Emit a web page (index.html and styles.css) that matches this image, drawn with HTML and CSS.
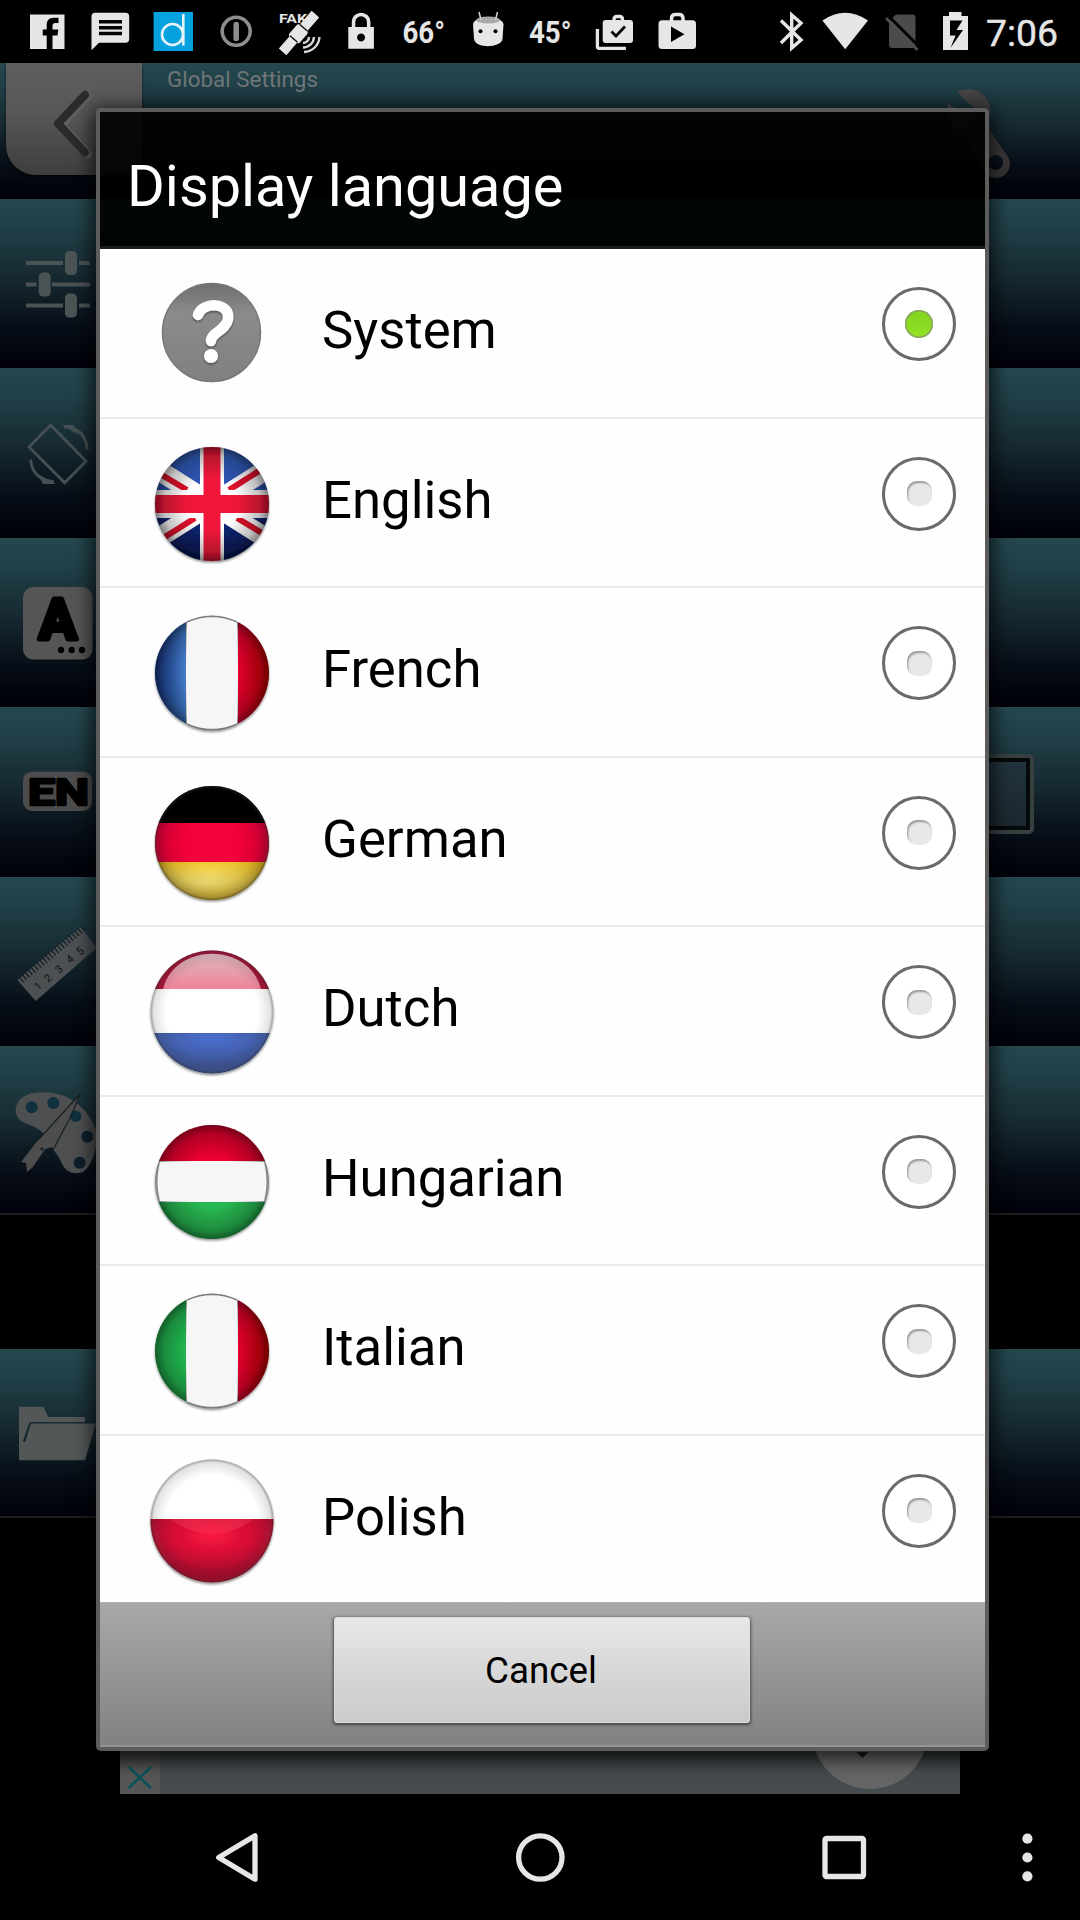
FILE: index.html
```html
<!DOCTYPE html>
<html lang="en">
<head>
<meta charset="utf-8">
<title>Display language</title>
<link rel="stylesheet" href="styles.css">
</head>
<body>
<svg class="defs" width="0" height="0" aria-hidden="true">
  <defs>
    <clipPath id="disc"><circle r="57"/></clipPath>
    <clipPath id="disc-lg"><circle r="61.5"/></clipPath>
    <radialGradient id="shade" cx=".5" cy=".5" r=".5">
      <stop offset=".45" stop-color="#000" stop-opacity="0"/>
      <stop offset=".85" stop-color="#000" stop-opacity=".25"/>
      <stop offset="1" stop-color="#000" stop-opacity=".5"/>
    </radialGradient>
    <radialGradient id="shade-soft" cx=".5" cy=".5" r=".5">
      <stop offset=".75" stop-color="#333" stop-opacity="0"/>
      <stop offset=".95" stop-color="#333" stop-opacity=".14"/>
      <stop offset="1" stop-color="#222" stop-opacity=".45"/>
    </radialGradient>
    <linearGradient id="uk-blue" x1="0" y1="0" x2="0" y2="1"><stop offset=".1" stop-color="#3460c0"/><stop offset=".45" stop-color="#2c4fae"/><stop offset=".6" stop-color="#122a7c"/><stop offset="1" stop-color="#081858"/></linearGradient>
    <linearGradient id="gray" x1="0" y1="0" x2="0" y2="1"><stop offset="0" stop-color="#6e6e6e"/><stop offset=".3" stop-color="#8b8b8b"/><stop offset="1" stop-color="#808080"/></linearGradient>
    <linearGradient id="fr-blue" x1="0" y1="0" x2="1" y2="0"><stop offset="0" stop-color="#1a3d94"/><stop offset="1" stop-color="#4580d0"/></linearGradient>
    <linearGradient id="side-red" x1="0" y1="0" x2="1" y2="0"><stop offset="0" stop-color="#e80034"/><stop offset="1" stop-color="#d00000"/></linearGradient>
    <radialGradient id="gold" cx=".45" cy=".5" r=".6"><stop offset="0" stop-color="#f7e67c"/><stop offset="1" stop-color="#eec022"/></radialGradient>
    <linearGradient id="gloss" x1="0" y1="0" x2="0" y2="1"><stop offset="0" stop-color="#dfb8c0"/><stop offset="1" stop-color="#f08399"/></linearGradient>
    <radialGradient id="nl-blue" cx=".5" cy=".15" r=".65"><stop offset="0" stop-color="#4a6fcf"/><stop offset="1" stop-color="#3d5292"/></radialGradient>
    <radialGradient id="pl-red" cx=".5" cy=".25" r=".6"><stop offset="0" stop-color="#fb1540"/><stop offset=".5" stop-color="#d80f36"/><stop offset="1" stop-color="#a40b29"/></radialGradient>
    <linearGradient id="steel" x1="0" y1="0" x2="1" y2="1"><stop offset="0" stop-color="#4b4849"/><stop offset="1" stop-color="#343133"/></linearGradient>
    <filter id="drop" x="-20%" y="-20%" width="140%" height="140%"><feDropShadow dx="0" dy="1.5" stdDeviation="1.3" flood-color="#000" flood-opacity=".45"/></filter>
  </defs>
</svg>

<div class="phone">
  <header class="status">
    <svg viewBox="0 0 1080 63" width="1080" height="63" fill="#e6e6e6">
      <path fill-rule="evenodd" d="M30 14.500h34.500v34.500h-12v-13.500h5l.8-6h-5.800v-3.500c0-2 .8-3 3.200-3h2.800v-5.200h-4.500c-5 0-7.300 2.800-7.300 7.200v4.500h-4v6h4v13.500H30z"/>
      <path fill-rule="evenodd" d="M95 12.700h30.500a3.700 3.700 0 0 1 3.700 3.700V39a3.700 3.700 0 0 1-3.700 3.700H99l-7.500 7.500V16.400a3.700 3.700 0 0 1 3.500-3.700zM99 20v3.500h23V20zm0 5.900v3.500h23v-3.500zm0 5.900v3.400h23v-3.400z"/>
      <path fill="#06a2df" d="M153.600 12H193v39h-39.400z"/>
      <g fill="none" stroke="#e6f2f8" stroke-width="2.600"><circle cx="172.500" cy="34.500" r="10.500"/><path d="M183.300 14v31.500"/></g>
      <circle cx="236.200" cy="31.300" r="14" fill="none" stroke="#8d8d8d" stroke-width="3.600"/>
      <path d="M236.200 24.500v14" stroke="#8d8d8d" stroke-width="5.500" stroke-linecap="round"/>
      <text class="sb-fake" x="279" y="23" textLength="28" lengthAdjust="spacingAndGlyphs">FAK</text>
      <g transform="translate(299 33) rotate(-49)"><path d="M-25-5H-8V5h-17zM7-5h18V5H7z"/><rect x="-9" y="-7" width="16" height="14" rx="3"/><path d="M-8-5v10M7-5v10" stroke="#000" stroke-width="1.200"/></g>
      <g fill="none" stroke="#d8d8d8" stroke-width="2.400"><path d="M303 43a6 6 0 0 0 6-6M303 47.500a11 11 0 0 0 11-10.500M304 52a16 16 0 0 0 15.500-15"/></g>
      <path fill-rule="evenodd" d="M348.300 27h3.500v-5.500a9.300 8.800 0 0 1 18.600 0V27h3.500v21.700h-25.600zm7-0h11.600v-5a5.800 5.800 0 0 0-11.600 0zM361 33.500a4 4 0 1 0 .1 0z"/>
      <text class="sb-temp" x="402.500" y="42.700" textLength="42.500" lengthAdjust="spacingAndGlyphs">66°</text>
      <path d="M473 24c2-9 28-9 30.500 0l-1 15c-1 9-27 10-28.500 0z"/><ellipse cx="488.200" cy="20" rx="12" ry="3.500" fill="#a8a8a8"/>
      <path d="M481 20l-2-8M495.500 20l2-8" stroke="#ccc" stroke-width="1.600"/><circle cx="480.500" cy="31.300" r="2" fill="#000"/><circle cx="495.500" cy="31.300" r="2" fill="#000"/>
      <text class="sb-temp" x="529" y="42.700" textLength="42.500" lengthAdjust="spacingAndGlyphs">45°</text>
      <path fill="none" stroke="#e6e6e6" stroke-width="3.300" d="M597.400 29v17.500a1.800 1.800 0 0 0 1.800 1.800h26.700M614 21v-1.500q0-3 3-3h2.500q3 0 3 3V21"/>
      <rect x="602.700" y="20" width="30.300" height="23" rx="3"/>
      <path d="M611.500 31.500l4.500 4.500 9-9.500" fill="none" stroke="#000" stroke-width="2.700"/>
      <path d="M671.500 21v-2.500q0-4 4-4h3.500q4 0 4 4V21" fill="none" stroke="#e6e6e6" stroke-width="3.500"/>
      <rect x="658.500" y="20.300" width="37.500" height="28.700" rx="3.500"/><path d="M671 26.500v15.500l13.500-7.800z" fill="#000"/>
      <path d="M781 20.500l20 19.500-9.300 8V15l9.300 8-20 20" fill="none" stroke="#e6e6e6" stroke-width="3.400"/>
      <path d="M822.400 20.500q22.800-15.500 45.600 0L845.200 49.300z"/>
      <path d="M896 14.500h16.500a3 3 0 0 1 3 3V45a3 3 0 0 1-3 3H892a3 3 0 0 1-3-3V21z" fill="#4b4b4b"/><path d="M888.500 16l32 32" stroke="#000" stroke-width="3"/><path d="M886 18l31.500 32" stroke="#4b4b4b" stroke-width="3"/>
      <path fill-rule="evenodd" d="M949 12h12.500v4H968v34h-25V16h6zM950 20.500v15h5.500l-5 12.500 12.500-18h-6.500l6-9.500z"/>
      <text class="sb-time" x="986" y="46" textLength="72" lengthAdjust="spacingAndGlyphs">7:06</text>
    </svg>
  </header>

  <main class="screen">
    <section class="bar">
      <div class="back">
        <svg viewBox="0 0 136 112" width="136" height="112"><path d="M82 33L56 62l26 29" fill="none" stroke="#606060" stroke-width="8" stroke-linecap="round"/><path d="M79 32L52 60.500l27 29" fill="none" stroke="#2b2b2b" stroke-width="8" stroke-linecap="round" stroke-linejoin="round"/></svg>
      </div>
      <h2 class="bar-title">Global Settings</h2>
      <svg class="wrench" viewBox="0 0 70 100" width="70" height="100"><path fill="url(#steel)" fill-rule="evenodd" d="M15 7C31-2 51 10 48 30l-1 14 19 28a13.500 13.500 0 1 1-24 14L24 52Q4 42 6 18l13 10 13-5zM53.500 70a7.500 7.500 0 1 0 .1 0z"/></svg>
    </section>

    <section class="setting">
      <svg viewBox="0 0 100 169" width="100" height="169"><path d="M26 63h37m16 0h11M26 84.500h10.500m15.500 0h38M26 105.600h37m16 0h11" stroke="#4c5355" stroke-width="4"/><g fill="#4c5355"><rect x="65" y="51" width="12" height="24" rx="4.500"/><rect x="38.700" y="72.500" width="12" height="24" rx="4.500"/><rect x="65" y="93.500" width="12" height="24" rx="4.500"/></g></svg>
    </section>
    <section class="setting">
      <svg viewBox="0 0 100 169" width="100" height="169"><g fill="none" stroke="#465054" stroke-width="2.800"><path d="M50.700 56L86 92.300l-21.300 21.500L29 78z"/><path d="M64 57.500q21 1 23.300 23M30.700 90.600q1.500 20 23 22"/></g><path fill="#465054" d="M62 56h11l6 10zM56 115H43l-5-10z"/></svg>
    </section>
    <section class="setting">
      <svg viewBox="0 0 100 169" width="100" height="169"><rect x="23" y="48" width="69.500" height="72.500" rx="10" fill="#555"/><text class="glyph-a" x="57.800" y="99.500" text-anchor="middle">A</text><circle cx="61" cy="111" r="3.200"/><circle cx="71.700" cy="111" r="3.200"/><circle cx="82" cy="111" r="3.200"/></svg>
    </section>
    <section class="setting">
      <svg viewBox="0 0 100 169" width="100" height="169"><rect x="23" y="63.700" width="69" height="39.300" rx="9" fill="#4d4d4d"/><text class="glyph-en" x="28" y="97" textLength="61" lengthAdjust="spacingAndGlyphs">EN</text></svg>
      <div class="field"></div>
    </section>
    <section class="setting">
      <svg viewBox="0 0 100 169" width="100" height="169"><path d="M17.300 102L80.700 48.700l16 21L35.700 123z" fill="#4c5052"/><path d="M21 102L83 50" stroke="#111c22" stroke-width="7" stroke-dasharray="1.200 2.600"/><g class="ruler-marks"><text transform="translate(38 113) rotate(-40)">1</text><text transform="translate(48 105) rotate(-40)">2</text><text transform="translate(59 96) rotate(-40)">3</text><text transform="translate(70 86) rotate(-40)">4</text><text transform="translate(80 78) rotate(-40)">5</text></g></svg>
    </section>
    <section class="setting last">
      <svg viewBox="0 0 100 169" width="100" height="169"><path fill="#4d4f50" d="M43 86C33 75 17 79 15.700 64 16 39 58 43 72 53c14 9 23 22 25 34 0 16-5 32-14 38-6 2-11 1-13 0-8-3-8-12-15-20z"/><g fill="#10313d"><circle cx="31.700" cy="60.300" r="6"/><circle cx="53.300" cy="56" r="6"/><circle cx="75.700" cy="69.300" r="5.700"/></g><g fill="#0e1f2b"><circle cx="87.300" cy="89.700" r="6"/><circle cx="79.700" cy="115.700" r="6"/></g><path d="M80 47L44 87 35 97l-14 18 5 1 1 9 6-5 12-18 10-3z" fill="#4d4d4d"/><path d="M80 47L40 91M80 47l-8 20-19 36" stroke="#1a2022" stroke-width="1.300" fill="none"/><circle cx="42" cy="102" r="1.700" fill="#222"/></svg>
    </section>
    <div class="void"></div>
    <section class="setting last">
      <svg viewBox="0 0 100 169" width="100" height="169"><path d="M19 56.700h24.300l5 10.300H85v5H29.500L23 91l2 1 6-18.500h65L85 110.200H19z" fill="#535758"/></svg>
    </section>
    <aside class="ad">
      <div class="ad-close"><svg viewBox="0 0 40 44" width="40" height="44"><path d="M8.500 17l22.500 21M31 17L8.500 38" stroke="#0b5358" stroke-width="2.800"/></svg></div>
      <svg class="ad-logo" viewBox="0 0 120 44" width="120" height="44"><circle cx="60" cy="-19" r="58" fill="#656565"/><path d="M46 2h13l-6.500 6z" fill="#1d2022"/></svg>
    </aside>
  </main>

  <nav class="nav">
    <svg viewBox="0 0 1080 126" width="1080" height="126" fill="none" stroke="#e6e6e6" stroke-width="5.300"><path d="M218.700 63.500L255 41.800v43.400z" stroke-linejoin="round"/><circle cx="540.300" cy="63.500" r="21.700"/><rect x="825" y="44.500" width="38.500" height="38" rx="1.500"/><g fill="#e6e6e6" stroke="none"><circle cx="1027.400" cy="44.700" r="5.100"/><circle cx="1027.400" cy="63.500" r="5.100"/><circle cx="1027.400" cy="82.300" r="5.100"/></g></svg>
  </nav>

  <div class="dialog" role="dialog">
    <h1 class="dialog-title">Display language</h1>
    <ul class="list">
      <li class="item">
        <svg class="flag" viewBox="-65 -65 130 130"><circle cx="-.5" cy="-1.500" r="49" fill="url(#gray)" stroke="#777" stroke-width="1.500"/><g filter="url(#drop)"><path d="M-14-19C-10-33 19-32 16-15 14-3-1-2-1 7" fill="none" stroke="#fff" stroke-width="10.500" stroke-linecap="round"/><circle cx="-1" cy="22" r="7" fill="#fff"/></g></svg>
        <span class="name">System</span><span class="radio on"></span>
      </li>
      <li class="item">
        <svg class="flag" viewBox="-65 -65 130 130"><g filter="url(#drop)"><g clip-path="url(#disc)"><path fill="url(#uk-blue)" d="M-57-57H57V57H-57z"/><path stroke="#fff" stroke-width="20" d="M-60-38L60 38M-60 38L60-38"/><path stroke="#e3122b" stroke-width="6" d="M-55-32l30 18M17-14l38-24M-17 14l-38 24M25 14l30 18"/><path fill="#fff" d="M-12-57h24v114h-24z"/><path fill="#fff" d="M-57-14H57v28H-57z"/><path fill="#f0183a" d="M-8.500-57h17V-9H57V9H8.500v48h-17V9H-57V-9h48.500z"/></g><circle r="57" fill="url(#shade)"/></g></svg>
        <span class="name">English</span><span class="radio"></span>
      </li>
      <li class="item">
        <svg class="flag" viewBox="-65 -65 130 130"><g filter="url(#drop)"><g clip-path="url(#disc)"><path fill="#f6f6f6" d="M-57-57H57V57H-57z"/><path fill="url(#fr-blue)" d="M-57-57h31V57h-31z"/><path fill="url(#side-red)" d="M26-57h31V57H26z"/></g><circle r="57" fill="url(#shade)"/><path fill="#f6f6f6" d="M-25-50.500Q0-61 25-50.500v101Q0 61-25 50.500z"/><path d="M-25-51Q0-63 25-51M-25 51Q0 63 25 51" fill="none" stroke="#777" stroke-width="1.200"/></g></svg>
        <span class="name">French</span><span class="radio"></span>
      </li>
      <li class="item">
        <svg class="flag" viewBox="-65 -65 130 130"><g filter="url(#drop)"><g clip-path="url(#disc)"><path d="M-57-57H57v37H-57z"/><path fill="#f4003a" d="M-57-20H57v39H-57z"/><path fill="url(#gold)" d="M-57 19H57v38H-57z"/></g><circle r="57" fill="url(#shade-soft)"/><circle r="57" fill="url(#shade)" opacity=".5"/></g></svg>
        <span class="name">German</span><span class="radio"></span>
      </li>
      <li class="item">
        <svg class="flag" viewBox="-65 -65 130 130"><g filter="url(#drop)"><g clip-path="url(#disc-lg)"><path fill="#fff" d="M-62-62H62V62H-62z"/><path fill="#aa1236" d="M-62-62H62v39H-62z"/><path fill="url(#gloss)" d="M-49-23C-37-70 37-70 49-23z"/><path fill="url(#nl-blue)" d="M-62 21H62v41H-62z"/></g><circle r="61.500" fill="url(#shade-soft)"/></g></svg>
        <span class="name">Dutch</span><span class="radio"></span>
      </li>
      <li class="item">
        <svg class="flag" viewBox="-65 -65 130 130"><g filter="url(#drop)"><g clip-path="url(#disc)"><path fill="#ec0030" d="M-57-57H57v36H-57z"/><path fill="#fbfbfb" d="M-57-21H57v41H-57z"/><path fill="#28b852" d="M-57 20H57v37H-57z"/></g><circle r="57" fill="url(#shade)"/><path fill="#f6f6f6" d="M-52-20H52Q57 0 52 19H-52Q-57 0-52-20z"/></g></svg>
        <span class="name">Hungarian</span><span class="radio"></span>
      </li>
      <li class="item">
        <svg class="flag" viewBox="-65 -65 130 130"><g filter="url(#drop)"><g clip-path="url(#disc)"><path fill="#f6f6f6" d="M-57-57H57V57H-57z"/><path fill="#22b850" d="M-57-57h31V57h-31z"/><path fill="url(#side-red)" d="M26-57h31V57H26z"/></g><circle r="57" fill="url(#shade)"/><path fill="#f6f6f6" d="M-25-50.500Q0-61 25-50.500v101Q0 61-25 50.500z"/><path d="M-25-51Q0-63 25-51M-25 51Q0 63 25 51" fill="none" stroke="#777" stroke-width="1.200"/></g></svg>
        <span class="name">Italian</span><span class="radio"></span>
      </li>
      <li class="item">
        <svg class="flag" viewBox="-65 -65 130 130"><g filter="url(#drop)"><g clip-path="url(#disc-lg)"><path fill="#fff" d="M-62-62H62V62H-62z"/><path fill="url(#pl-red)" d="M-62-2H62v64H-62z"/><path fill="#ff4a68" fill-opacity=".3" d="M-42-2H42Q0 28-42-2z"/></g><circle r="61.500" fill="url(#shade-soft)"/></g></svg>
        <span class="name">Polish</span><span class="radio"></span>
      </li>
    </ul>
    <footer class="actions"><button class="cancel">Cancel</button></footer>
  </div>
</div>
</body>
</html>
```
FILE: styles.css
```css
* { box-sizing: border-box; }
body { margin: 0; background: #000; font-family: Roboto, "Liberation Sans", sans-serif; }
.defs { position: absolute; }
svg { display: block; flex: none; }
.phone { position: relative; width: 1080px; height: 1920px; overflow: hidden; background: #000; display: flex; flex-direction: column; }

.status { height: 63px; }
.sb-fake { font-size: 13px; font-weight: 700; }
.sb-temp { font-size: 31.5px; font-weight: 700; }
.sb-time { font-size: 37px; font-weight: 400; stroke: #e6e6e6; stroke-width: .4px; }

.screen { height: 1731px; display: flex; flex-direction: column; }
.bar, .setting { background: linear-gradient(#25474e 0%, #214048 15%, #172a32 45%, #070e17 75%, #00000a 100%); }
.bar { height: 136px; padding-left: 6px; display: flex; align-items: flex-start; flex: none; }
.back { width: 136px; height: 112px; border-radius: 0 0 0 30px; background: linear-gradient(#5e5e5e, #575757 45%, #3e3e3e); box-shadow: 0 3px 3px rgba(0, 0, 0, .6); }
.bar-title { margin: 3px 0 0 25px; font-size: 22.4px; line-height: 27px; font-weight: 400; color: #6f7678; }
.wrench { margin: 22px 68px 0 auto; }
.setting { height: 169.4px; flex: none; display: flex; align-items: flex-start; justify-content: space-between; border-top: 1px solid #2a474d; }
.last { border-bottom: 2px solid #1d1f22; }
.void { height: 133.500px; flex: none; }
.field { width: 80px; height: 80px; margin: 46px 46px 0 0; border: 4px solid #373f41; border-radius: 5px; background: linear-gradient(#22343d, #1b262e); box-shadow: inset 0 0 0 4px #05090c; }
.glyph-a { font-size: 56px; font-weight: 700; stroke: #000; stroke-width: 5px; stroke-linejoin: round; }
.glyph-en { font-size: 37px; font-weight: 700; stroke: #000; stroke-width: 2.500px; stroke-linejoin: round; }
.ruler-marks { font-size: 11px; fill: #111; }

.ad { width: 840px; height: 44px; margin: auto auto 0; background: linear-gradient(#2f3535, #454a4d 50%, #474c50); display: flex; justify-content: space-between; flex: none; }
.ad-close { width: 40px; background: linear-gradient(#3a3a3a, #565656 50%); }
.ad-logo { margin-right: 30px; overflow: hidden; }
.nav { height: 126px; }

.dialog { position: absolute; left: 96px; top: 108px; width: 893px; height: 1643px; border: 4px solid #5c5c5c; border-radius: 5px; display: flex; flex-direction: column; box-shadow: 0 4px 18px 5px rgba(0, 0, 0, .65); }
.dialog-title { margin: 0; height: 137px; padding: 41px 0 0 27px; border-bottom: 3px solid #1c1c1c; background: rgba(0, 0, 0, .91); color: #fff; font-size: 57.7px; line-height: 67px; font-weight: 400; }
.list { margin: 0; padding: 0; list-style: none; height: 1353px; background: #fefefe; overflow: hidden; }
.item { height: 169.500px; display: grid; grid-template-columns: 224px 1fr 130px; border-bottom: 2px solid #ebebeb; }
.item:last-child { border-bottom: 0; }
.flag { width: 130px; height: 130px; margin: 20px 0 0 47px; }
.name { padding-top: 50px; font-size: 52.700px; line-height: 62px; color: #000; margin-left: -2px; }
.radio { width: 74px; height: 74px; margin: 38px 0 0 27px; border: 3px solid #6a6a6a; border-radius: 50%; display: flex; align-items: center; justify-content: center; background: #fff; }
.radio::before { content: ""; width: 25px; height: 25px; border-radius: 10px; background: #e8e8e8; box-shadow: inset 1px 2px 2px #999; }
.radio.on::before { width: 28px; height: 28px; border-radius: 50%; background: linear-gradient(#80d41e, #92e324); box-shadow: inset 0 0 0 1.500px #8ba369; }
.actions { flex: 1; padding-top: 14px; background: linear-gradient(#a8a8a8, #999 40%, #828282); border-top: 1px solid #b2b2b2; border-bottom: 2px solid #949494; display: flex; justify-content: center; align-items: flex-start; }
.cancel { width: 416px; height: 106px; padding: 0 2px 0 0; margin-right: 1px; border: 1px solid #ddd; border-radius: 3px; background: linear-gradient(#e8e8e8, #d9d9d9 45%, #cacaca); box-shadow: 0 1px 3px 1px rgba(0, 0, 0, .5); font: 400 36.800px Roboto, "Liberation Sans", sans-serif; color: #000; }
```
